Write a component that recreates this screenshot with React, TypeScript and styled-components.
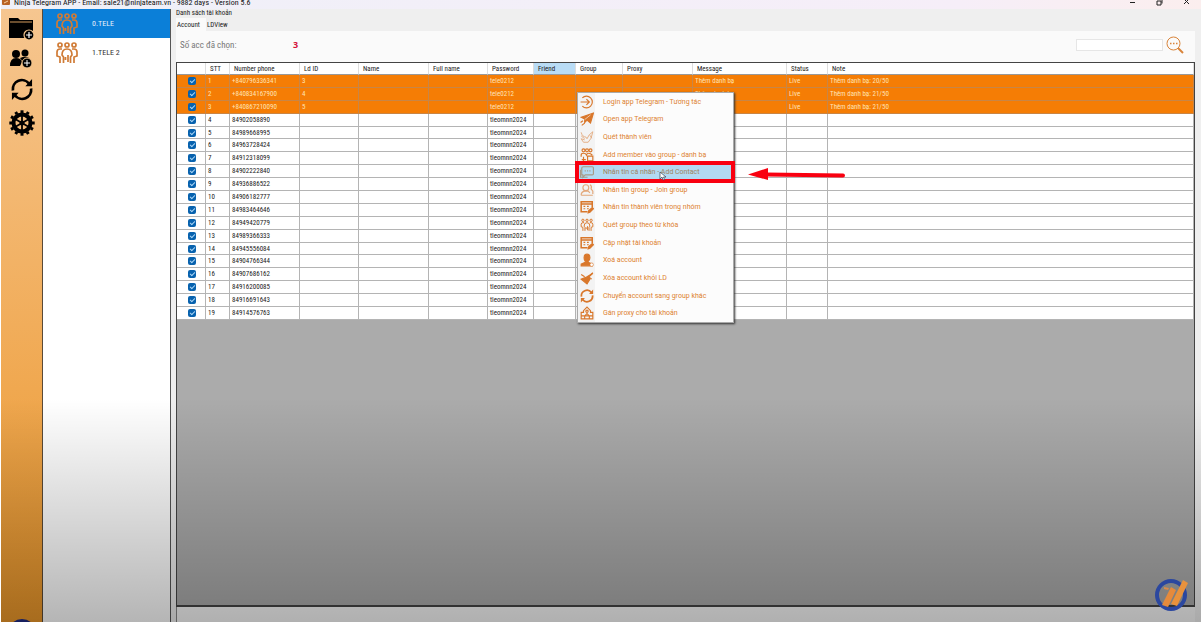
import React from "react";
import styled, { createGlobalStyle } from "styled-components";

const Global = createGlobalStyle`
  * { box-sizing: border-box; }
  html, body { margin: 0; height: 100%; background: #fff; }
  body { font-family: "Roboto Condensed", Roboto, "Liberation Sans", sans-serif; font-size: 7px; line-height: 10px; color: #222; }
  #root { height: 100%; }
  button { font: inherit; }
`;

const Win = styled.div`
  position: relative;
  display: flex;
  flex-direction: column;
  height: 100vh;
  margin: 0 3px 0 1px;
  overflow: hidden;
  background: #efefef;
  &::after {
    content: "";
    position: absolute;
    inset: 0;
    pointer-events: none;
    background: linear-gradient(transparent 64%, rgba(0, 0, 0, 0.29));
  }
`;

const TitleBar = styled.header`
  display: flex;
  align-items: center;
  height: 9px;
  padding: 0 11px 4px 1px;
  gap: 4px;
  background: linear-gradient(90deg, #eff0f8, #f6eef8 80%, #fbeeee);
  flex: none;
`;

const TitleText = styled.h1`
  margin: 0;
  flex: 1;
  font-weight: 400;
  font-size: 8px;
  line-height: 8px;
  color: #111;
`;

const WinButtons = styled.div`
  display: flex;
  gap: 20px;
`;

const WinButton = styled.button`
  border: 0;
  padding: 0;
  width: 7px;
  height: 7px;
  background: none;
  display: flex;
`;

const Body = styled.div`
  flex: 1;
  min-height: 0;
  display: flex;
`;

const Rail = styled.nav`
  flex: none;
  width: 42px;
  border-right: 1px solid #5a4a38;
  background: linear-gradient(#f6c690, #f0a850 62%, #ec982a);
  display: flex;
  flex-direction: column;
  align-items: center;
  gap: 9px;
  padding-top: 8px;
  overflow: hidden;
`;

const RailButton = styled.button<{ $h: number }>`
  border: 0;
  padding: 0;
  background: none;
  height: ${(p) => p.$h}px;
  width: 26px;
  color: #000;
  flex: none;
  svg { display: block; width: 100%; height: 100%; }
`;

const RailLogo = styled.div`
  margin-top: auto;
  margin-bottom: -25px;
  width: 28px;
  height: 28px;
  flex: none;
  border: 5px solid #202c84;
  border-radius: 50%;
`;

const Groups = styled.aside`
  flex: none;
  width: 128px;
  background: #fff;
  border-right: 1px solid #555;
`;

const GroupButton = styled.button<{ $on?: boolean }>`
  display: flex;
  align-items: center;
  gap: 13px;
  width: 100%;
  height: 29px;
  border: 0;
  padding: 0 0 0 12px;
  text-align: left;
  font-size: 8px;
  background: ${(p) => (p.$on ? "#0b7fd8" : "#fff")};
  color: ${(p) => (p.$on ? "#e4f0fa" : "#333")};
  svg { width: 24px; height: 22px; color: #d07b35; }
`;

const Main = styled.main`
  flex: 1;
  min-width: 0;
  display: flex;
  flex-direction: column;
  padding: 0 6px 0 5px;
`;

const Caption = styled.div`
  height: 9px;
  line-height: 9px;
`;

const Tabs = styled.div`
  display: flex;
  height: 13px;
`;

const Tab = styled.button<{ $on?: boolean }>`
  border: 0;
  padding: 0 6px 0 1px;
  background: ${(p) => (p.$on ? "#fafafa" : "transparent")};
  color: #222;
  min-width: 30px;
  text-align: left;
`;

const Pane = styled.section`
  flex: 1;
  min-height: 0;
  background: #fafafa;
  display: flex;
  flex-direction: column;
`;

const Tools = styled.div`
  display: flex;
  align-items: center;
  height: 31px;
  padding: 0 11px 4px 4px;
`;

const CountLabel = styled.span`
  width: 113px;
  font-size: 9px;
  color: #777;
`;

const Count = styled.strong`
  flex: 1;
  font: 700 9px/12px "Open Sans", sans-serif;
  color: #d4123c;
`;

const Search = styled.input`
  width: 87px;
  height: 12px;
  border: 1px solid #e6e6e6;
  background: #fff;
  padding: 0 2px;
`;

const SearchButton = styled.button`
  border: 0;
  background: none;
  padding: 0;
  margin-left: 3px;
  width: 18px;
  height: 18px;
  svg { display: block; }
`;

const Grid = styled.div`
  position: relative;
  flex: 1;
  min-height: 0;
  border: 1px solid #444;
  border-bottom-width: 2px;
  background: #ababab;
`;

const Table = styled.table`
  width: 100%;
  height: 257px;
  table-layout: fixed;
  border-collapse: separate;
  border-spacing: 0;
  background: #fff;
`;

const Th = styled.th<{ $on?: boolean }>`
  height: 12px;
  padding: 0 0 0 4px;
  text-align: left;
  font-weight: 400;
  color: #222;
  background: ${(p) => (p.$on ? "#b9dcf5" : "#fff")};
  border-right: 1px solid #ddd;
  border-bottom: 1px solid #999;
  white-space: nowrap;
`;

const Tr = styled.tr<{ $on?: boolean }>`
  color: ${(p) => (p.$on ? "#ffe3b5" : "#222")};
  background: ${(p) => (p.$on ? "#f57d05" : "#fff")};
  td { border-color: ${(p) => (p.$on ? "#c98545" : "#b4b4b4")}; }
`;

const Td = styled.td`
  height: 12px;
  line-height: 10px;
  padding: 0 0 0 2px;
  border: 0 solid;
  border-width: 0 1px 1px 0;
  white-space: nowrap;
`;

const Check = styled.input`
  appearance: none;
  display: block;
  width: 8px;
  height: 8px;
  margin: 0 auto;
  border-radius: 2px;
  background: #0862ae;
  position: relative;
  &::after {
    content: "";
    position: absolute;
    left: 2px;
    top: 2px;
    width: 4px;
    height: 2px;
    border: solid #a8d4f4;
    border-width: 0 0 1px 1px;
    transform: rotate(-45deg);
  }
`;

const Menu = styled.div`
  position: absolute;
  left: 400px;
  top: 29px;
  width: 157px;
  height: 231px;
  display: grid;
  grid-auto-rows: 1fr;
  background: #fcfcfc;
  border: 1px solid #aaa;
  box-shadow: 1px 1px 2px #333;
`;

const MenuItem = styled.button<{ $on?: boolean }>`
  min-height: 0;
  border: 0;
  padding: 0 0 0 2px;
  display: flex;
  align-items: center;
  gap: 9px;
  font-family: Roboto, sans-serif;
  color: ${(p) => (p.$on ? "#a0845e" : "#dc8230")};
  background: ${(p) => (p.$on ? "#b2d9f2" : "linear-gradient(90deg, #f3f3f3 17px, #fcfcfc 17px)")};
  text-align: left;
  white-space: nowrap;
  svg { width: 14px; height: 14px; flex: none; color: ${(p) => (p.$on ? "#a79a88" : "#d9772b")}; }
`;

const RedBox = styled.div`
  position: absolute;
  left: 398px;
  top: 98px;
  width: 160px;
  height: 22px;
  border: 4px solid #f90010;
`;

const Arrow = styled.svg`
  position: absolute;
  left: 571px;
  top: 104px;
`;

const Pointer = styled.svg`
  position: absolute;
  left: 482px;
  top: 108px;
`;

const Footer = styled.footer`
  flex: none;
  height: 15px;
  border-left: 1px solid #888;
  background: #f8f8f8;
`;

const Brand = styled.svg`
  position: absolute;
  right: 11px;
  bottom: 11px;
  z-index: 2;
`;

const People = () => (
  <svg viewBox="0 0 24 22" fill="none" stroke="currentColor" strokeWidth="1.7" aria-hidden="true">
    <circle cx="5" cy="3" r="2" /><circle cx="12" cy="3" r="2" /><circle cx="19" cy="3" r="2" />
    <path d="M5 21v-6l-3-1V10q0-3 3-3h2M19 21v-6l3-1V10q0-3-3-3h-2M8.500 21v-6l-1.500-2q0-6 5-6t5 6l-1.500 2v6M10.500 15v3M13 13v7" />
  </svg>
);

const Sync = ({ w = 2 }: { w?: number }) => (
  <svg viewBox="0 0 24 24" fill="none" stroke="currentColor" strokeWidth={w} aria-hidden="true">
    <path d="M2.500 13a9.500 9.500 0 0 1 17-7M21.500 11a9.500 9.500 0 0 1-17 7" />
    <path d="M22.500 1v7.500h-7zM1.500 23v-7.500h7z" fill="currentColor" stroke="none" />
  </svg>
);

const glyphs: Record<string, React.ReactNode> = {
  login: <><path d="M4 5a10 10 0 1 1 0 14M1 12h15M11 7l5 5-5 5" /></>,
  plane: <><path d="M2 9 23 2l-5 17-6-5-4 4v-6z" fill="currentColor" /><path d="m8 13 10-8" stroke="#fff" strokeWidth="1" /><path d="M1 18l4-3M3 23l5-4" /></>,
  scan: <path d="M2 4q2 8 8 8l2 3 4-7 6-5-3 11-5 7H6l-4-6 6 2M2 10l6 5M17 9l3 5" strokeWidth="1.500" />,
  add: <><circle cx="6" cy="4" r="2.500" /><circle cx="12" cy="4" r="2.500" /><circle cx="18" cy="4" r="2.500" /><path d="M2 15v-3q0-3 4-3t5 3q1-3 4-3t6 3M3 20h7M6 15v8M13 14h9v8h-9z" /></>,
  chat: <><path d="M6 3h15q2 0 2 2v10q0 2-2 2H9l-4 4v-4H3V5q0-2 3-2z" /><path d="M8 10h2M12 10h2M16 10h2M1 8v13h12" /></>,
  person: <><circle cx="10" cy="8" r="5" /><path d="M2 21q0-6 6-7h6l3 3M2 21h20M17 3q4 2 2 7l3 4v5" /></>,
  form: <><path d="M21 12V3H2v17h11M2 7h19" strokeWidth="2.600" /><path d="M6 11h3M12 11h3M6 15h3M12 15h3" /><path d="m14 22 1-4 6-5 2 2-6 6z" fill="currentColor" /></>,
  user: <><path d="M7 8q0-6 5-6t5 6q0 4-3 6v2l7 3v3H2v-3l7-3v-2Q7 12 7 8z" fill="currentColor" /><circle cx="20" cy="20" r="3" fill="#fff" strokeWidth="1" /></>,
  broom: <><path d="m22 4-7 6 2 4-5 8-10-8 8-3z" fill="currentColor" /><path d="M2 6l6 4M15 10l5 4M22 3l-6 6" /></>,
  proxy: <><path d="M2 22V11h4V8l6-6 6 6v3h4v11zM2 17h20M8 22v-5l4-4 4 4v5" /><circle cx="12" cy="9" r="2" /></>,
};

const Glyph = ({ name }: { name: string }) => {
  if (name === "people") return <People />;
  if (name === "sync") return <Sync w={3} />;
  return (
    <svg viewBox="0 0 24 24" fill="none" stroke="currentColor" strokeWidth="2" aria-hidden="true" opacity={["scan", "person"].includes(name) ? 0.6 : 1}>
      {glyphs[name]}
    </svg>
  );
};

const columns: [string, number | undefined][] = [
  ["", 29], ["STT", 24], ["Number phone", 70], ["Ld ID", 59], ["Name", 70], ["Full name", 59], ["Password", 46],
  ["Friend", 42], ["Group", 47], ["Proxy", 70], ["Message", 94], ["Status", 41], ["Note", undefined],
];

const phones = [
  "+840796336341", "+840834167900", "+840867210090", "84902058890", "84989668995", "84963728424", "84912318099",
  "84902222840", "84936886522", "84906182777", "84983464646", "84949420779", "84989366333", "84945556084",
  "84904766344", "84907686162", "84916200085", "84916691643", "84914576763",
];
const notes = ["Thêm danh bạ: 20/50", "Thêm danh bạ: 21/50", "Thêm danh bạ: 21/50"];

const menu: [string, string][] = [
  ["login", "Login app Telegram - Tương tác"], ["plane", "Open app Telegram"], ["scan", "Quét thành viên"],
  ["add", "Add member vào group - danh bạ"], ["chat", "Nhắn tin cá nhân - Add Contact"],
  ["person", "Nhắn tin group - Join group"], ["form", "Nhắn tin thành viên trong nhóm"],
  ["people", "Quét group theo từ khóa"], ["form", "Cập nhật tài khoản"], ["user", "Xoá account"],
  ["broom", "Xóa account khỏi LD"], ["sync", "Chuyển account sang group khác"], ["proxy", "Gán proxy cho tài khoản"],
];

const teeth = Array.from({ length: 12 }, (_, i) => i * 30);

export default function App() {
  return (
    <>
      <Global />
      <Win>
        <TitleBar>
          <svg width="8" height="7" viewBox="0 0 8 7" aria-hidden="true"><rect width="8" height="6" rx="1" fill="#b96325" /><path d="M2 4l4-2" stroke="#f8d0a0" /></svg>
          <TitleText>Ninja Telegram APP - Email: sale21@ninjateam.vn - 9882 days - Version 5.6</TitleText>
          <WinButtons>
            <WinButton aria-label="Minimize"><svg width="7" height="7"><path d="M1 3.500h5" stroke="#222" /></svg></WinButton>
            <WinButton aria-label="Restore"><svg width="7" height="7" fill="none" stroke="#222"><path d="M1 2h4v4H1zM3 .5h3v4" /></svg></WinButton>
            <WinButton aria-label="Close"><svg width="7" height="7"><path d="m1 0 5 5M6 0 1 5" stroke="#222" /></svg></WinButton>
          </WinButtons>
        </TitleBar>
        <Body>
          <Rail>
            <RailButton $h={23} aria-label="Add group">
              <svg viewBox="0 0 26 23"><path d="M0 1h9l2 2h13v18H0z" /><path d="M1 5h22" stroke="#d49b5c" /><circle cx="20" cy="18" r="5" fill="#000" stroke="#f4c48c" strokeWidth="1.200" /><path d="M17 18h6M20 15v6" stroke="#fff" strokeWidth="1.200" /></svg>
            </RailButton>
            <RailButton $h={20} aria-label="Add account">
              <svg viewBox="0 0 26 20"><circle cx="7" cy="5" r="4" /><circle cx="16" cy="4" r="3.500" /><path d="M1 17q0-8 6-8 5 0 6 4l-2 4zM11 9q7-3 10 1v3h-7z" /><circle cx="18" cy="14" r="5" stroke="#f4c48c" /><path d="M15 14h6M18 11v6" stroke="#fff" /></svg>
            </RailButton>
            <RailButton $h={23} aria-label="Refresh"><Sync w={2.8} /></RailButton>
            <RailButton $h={26} aria-label="Settings">
              <svg viewBox="-13 -13 26 26"><g fill="none" stroke="currentColor"><circle r="8.500" strokeWidth="4" />{teeth.map((a) => <path key={a} d="M0-10v-2.700" strokeWidth="3" transform={`rotate(${a})`} />)}{teeth.slice(0, 6).map((a) => <path key={a} d="M0 0v-8" strokeWidth="1.800" transform={`rotate(${a * 2})`} />)}</g><circle r="2.500" /></svg>
            </RailButton>
            <RailLogo />
          </Rail>
          <Groups>
            <GroupButton $on><People />0.TELE</GroupButton>
            <GroupButton><People />1.TELE 2</GroupButton>
          </Groups>
          <Main>
            <Caption>Danh sách tài khoản</Caption>
            <Tabs><Tab $on>Account</Tab><Tab>LDView</Tab></Tabs>
            <Pane>
              <Tools>
                <CountLabel>Số acc đã chọn:</CountLabel>
                <Count>3</Count>
                <Search aria-label="Search" />
                <SearchButton aria-label="Run search">
                  <svg width="18" height="18" viewBox="0 0 18 18" fill="none" stroke="#d9843a"><circle cx="7.500" cy="7.500" r="6.500" /><path d="M4 7.500h1.500M7 7.500h1.500M10 7.500h1.500" strokeWidth="1.500" /><path d="m12 12 5 5" strokeWidth="2" /></svg>
                </SearchButton>
              </Tools>
              <Grid>
                <Table>
                  <colgroup>{columns.map(([n, w]) => <col key={n} width={w} />)}</colgroup>
                  <thead><tr>{columns.map(([n]) => <Th key={n} $on={n === "Friend"}>{n}</Th>)}</tr></thead>
                  <tbody>
                    {phones.map((p, i) => {
                      const on = i < 3;
                      const cells = [i + 1, p, on ? i + 3 : "", "", "", on ? "tele0212" : "tleomnn2024", "", "", "", on ? "Thêm danh bạ" : "", on ? "Live" : "", notes[i] ?? ""];
                      return (
                        <Tr key={p} $on={on}>
                          <Td><Check type="checkbox" defaultChecked aria-label={`Select row ${i + 1}`} /></Td>
                          {cells.map((c, k) => <Td key={k}>{c}</Td>)}
                        </Tr>
                      );
                    })}
                  </tbody>
                </Table>
                <Menu>
                  {menu.map(([g, t], i) => <MenuItem key={t} $on={i === 4}><Glyph name={g} />{t}</MenuItem>)}
                </Menu>
                <RedBox />
                <Pointer width="8" height="10" viewBox="0 0 8 10"><path d="M1 1v7l2-2 1 3 1.500-.5-1-2.500H7z" fill="#fff" stroke="#345" strokeWidth=".7" /></Pointer>
                <Arrow width="98" height="16" viewBox="0 0 98 16"><path d="M18 7.500 95 8.500" stroke="#f90010" strokeWidth="4" strokeLinecap="round" /><path d="M0 7.500 20 1v12z" fill="#f90010" /></Arrow>
              </Grid>
              <Footer />
            </Pane>
          </Main>
        </Body>
        <Brand width="36" height="34" viewBox="0 0 36 34">
          <circle cx="17" cy="18" r="14" fill="none" stroke="#2b479f" strokeWidth="4" />
          <path d="m17 10 5 3-8 17-6-2z" fill="#e58a3c" />
          <path d="m29 3 5 3-11 23-6-2z" fill="#e8923c" />
          <path d="m10 10 5 1-1 2-4-1z" fill="#d98a4a" />
        </Brand>
      </Win>
    </>
  );
}
